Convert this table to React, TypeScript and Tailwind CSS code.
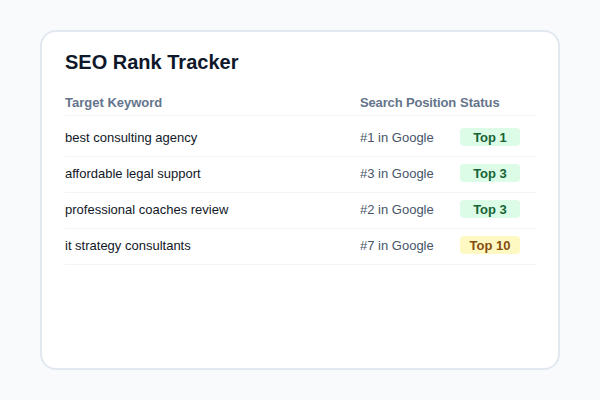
const rows = [
    { keyword: 'best consulting agency', position: 1, label: 'Top 1', tone: 'green' },
    { keyword: 'affordable legal support', position: 3, label: 'Top 3', tone: 'green' },
    { keyword: 'professional coaches review', position: 2, label: 'Top 3', tone: 'green' },
    { keyword: 'it strategy consultants', position: 7, label: 'Top 10', tone: 'yellow' },
] as const

const badgeColors = {
    green: 'bg-[#dcfce7] text-[#166534]',
    yellow: 'bg-[#fef9c3] text-[#854d0e]',
}

export default function App() {
    return (
        <div
            className="h-[400px] w-[600px] bg-[#f8fafc] px-[40px] py-[30px]"
            style={{ fontFamily: '"Liberation Sans", Arial, sans-serif' }}
        >
            <div className="h-[340px] rounded-2xl border-2 border-[#e2e8f0] bg-white pl-[23px] pr-[22px] pt-[19px]">
                <h2 className="text-[20px] leading-[23px] font-bold text-[#0f172a]">
                    SEO Rank Tracker
                </h2>

                <div className="mt-[21px]">
                    <div className="flex border-b border-[#f1f5f9] pb-[5px] text-[13px] leading-[15px] font-bold text-[#64748b]">
                        <div className="w-[295px]">Target Keyword</div>
                        <div className="w-[100px] tracking-[-0.15px]">Search Position</div>
                        <div className="flex-1">Status</div>
                    </div>

                    {rows.map((row, i) => (
                        <div
                            key={row.keyword}
                            className={
                                'flex items-center border-b border-[#f1f5f9] pb-[10px] text-[13px] leading-[15px] ' +
                                (i === 0 ? 'pt-[12px]' : 'pt-[7px]')
                            }
                        >
                            <div className="w-[295px] text-[#111827]">{row.keyword}</div>
                            <div className="w-[100px] text-[#475569]">#{row.position} in Google</div>
                            <div className="flex-1">
                                <span
                                    className={
                                        'flex h-[18px] w-[60px] items-center justify-center rounded-[4px] font-bold ' +
                                        badgeColors[row.tone]
                                    }
                                >
                                    {row.label}
                                </span>
                            </div>
                        </div>
                    ))}
                </div>
            </div>
        </div>
    )
}
